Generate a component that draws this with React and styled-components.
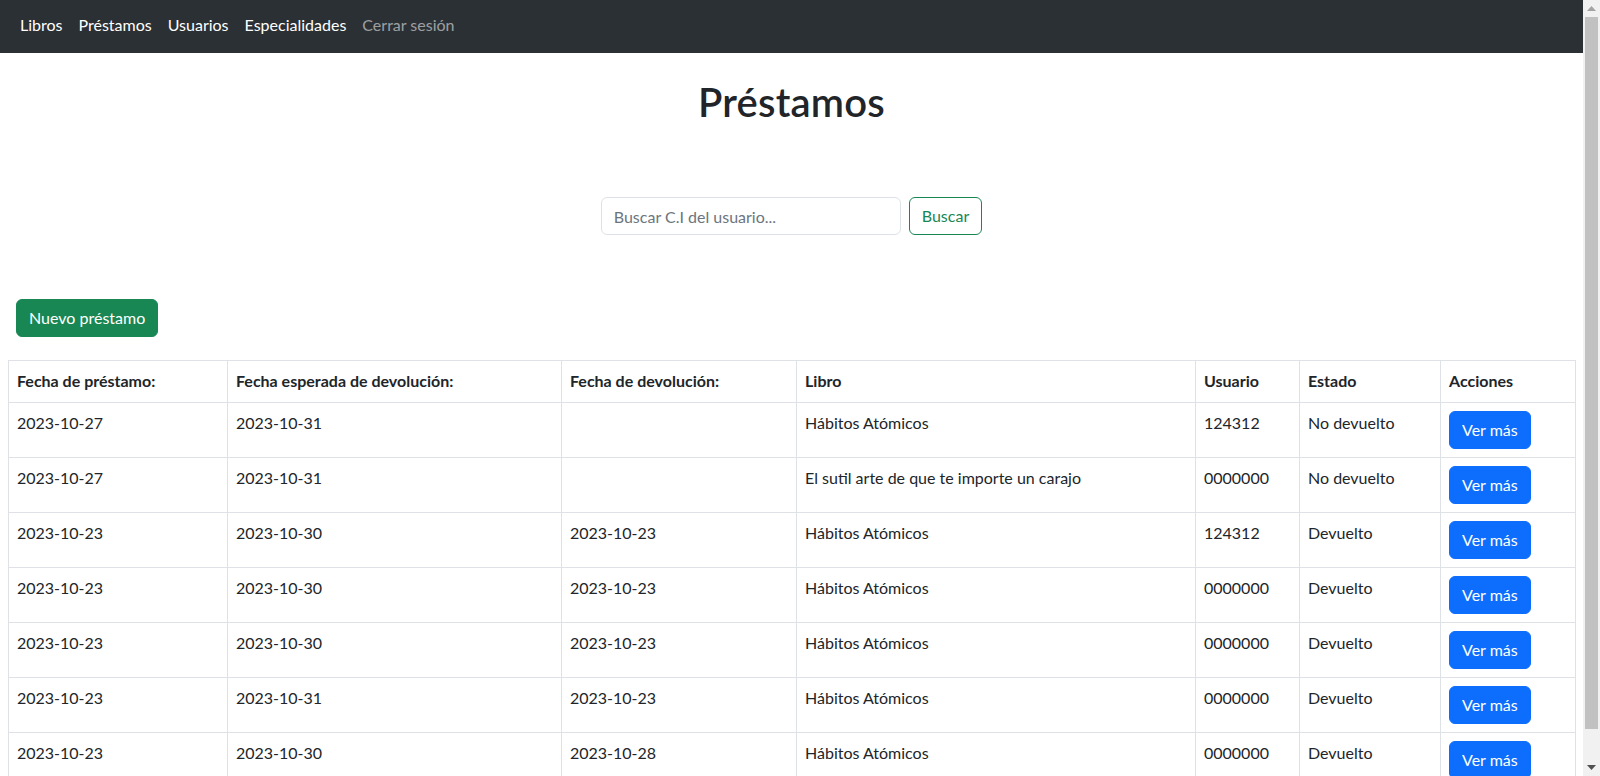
import React from 'react';
import styled, { createGlobalStyle } from 'styled-components';

const GlobalStyle = createGlobalStyle`
	html, body {
		margin: 0;
		padding: 0;
		height: 100%;
		overflow: hidden;
	}
	body {
		font-family: Lato, 'Open Sans', sans-serif;
		font-size: 16px;
		color: #212529;
		background: #fff;
	}
`;

const Shell = styled.div`
	display: flex;
	height: 776px;
	overflow: hidden;
`;

const Page = styled.div`
	flex: 1;
	min-width: 0;
	overflow: hidden;
`;

const Navbar = styled.nav`
	display: flex;
	align-items: center;
	box-sizing: border-box;
	height: 53px;
	padding: 0 12px 3px;
	background: #2b3035;
`;

const NavLink = styled.a`
	padding: 0 8px;
	font-size: 16px;
	line-height: 24px;
	color: ${(p) => (p.$muted ? 'rgba(255, 255, 255, 0.55)' : '#fff')};
	text-decoration: none;
	cursor: pointer;
`;

const Content = styled.main`
	padding: 0 8px;
`;

const Title = styled.h1`
	margin: 25px 0 0;
	font-size: 40px;
	line-height: 48px;
	font-weight: 600;
	letter-spacing: 0.2px;
	text-align: center;
`;

const SearchForm = styled.form`
	display: flex;
	justify-content: center;
	gap: 8px;
	margin-top: 71px;
`;

const SearchInput = styled.input`
	box-sizing: border-box;
	width: 300px;
	height: 38px;
	padding: 6px 12px;
	font-family: inherit;
	font-size: 16px;
	color: #212529;
	border: 1px solid #dee2e6;
	border-radius: 6px;
	outline: none;

	&::placeholder {
		color: #6c757d;
	}
`;

const Button = styled.button`
	box-sizing: border-box;
	height: 38px;
	padding: 6px 12px;
	font-family: inherit;
	font-size: 16px;
	line-height: 24px;
	border-radius: 6px;
	border: 1px solid ${(p) => p.$color};
	background: ${(p) => (p.$outline ? 'transparent' : p.$color)};
	color: ${(p) => (p.$outline ? p.$color : '#fff')};
	cursor: pointer;
	white-space: nowrap;
`;

const Toolbar = styled.div`
	margin-top: 64px;
	padding-left: 8px;
`;

const Table = styled.table`
	width: 100%;
	margin-top: 23px;
	border-collapse: collapse;
	table-layout: fixed;
`;

const Th = styled.th`
	padding: 8px 8px 9px;
	border: 1px solid #dee2e6;
	text-align: left;
	font-weight: 700;
	line-height: 24px;
	vertical-align: top;
`;

const Td = styled.td`
	padding: 8px;
	border: 1px solid #dee2e6;
	line-height: 24px;
	vertical-align: top;
	height: 38px;
`;

const Scrollbar = styled.div`
	display: flex;
	flex-direction: column;
	width: 17px;
	background: #f1f1f1;
`;

const Arrow = styled.div`
	display: flex;
	align-items: center;
	justify-content: center;
	height: 17px;
`;

const Track = styled.div`
	flex: 1;
	display: flex;
	padding: 0 2px;
`;

const Thumb = styled.div`
	width: 100%;
	height: 96%;
	background: #c1c1c1;
`;

const columns = [
	{ label: 'Fecha de préstamo:', width: 219 },
	{ label: 'Fecha esperada de devolución:', width: 334 },
	{ label: 'Fecha de devolución:', width: 235 },
	{ label: 'Libro', width: 399 },
	{ label: 'Usuario', width: 104 },
	{ label: 'Estado', width: 141 },
	{ label: 'Acciones', width: 135 },
];

const loans = [
	['2023-10-27', '2023-10-31', '', 'Hábitos Atómicos', '124312', 'No devuelto'],
	['2023-10-27', '2023-10-31', '', 'El sutil arte de que te importe un carajo', '0000000', 'No devuelto'],
	['2023-10-23', '2023-10-30', '2023-10-23', 'Hábitos Atómicos', '124312', 'Devuelto'],
	['2023-10-23', '2023-10-30', '2023-10-23', 'Hábitos Atómicos', '0000000', 'Devuelto'],
	['2023-10-23', '2023-10-30', '2023-10-23', 'Hábitos Atómicos', '0000000', 'Devuelto'],
	['2023-10-23', '2023-10-31', '2023-10-23', 'Hábitos Atómicos', '0000000', 'Devuelto'],
	['2023-10-23', '2023-10-30', '2023-10-28', 'Hábitos Atómicos', '0000000', 'Devuelto'],
];

const App = () => {
	return (
		<Shell>
			<GlobalStyle />
			<Page>
				<Navbar>
					<NavLink>Libros</NavLink>
					<NavLink>Préstamos</NavLink>
					<NavLink>Usuarios</NavLink>
					<NavLink>Especialidades</NavLink>
					<NavLink $muted>Cerrar sesión</NavLink>
				</Navbar>
				<Content>
					<Title>Préstamos</Title>
					<SearchForm onSubmit={(e) => e.preventDefault()}>
						<SearchInput placeholder='Buscar C.I del usuario...' />
						<Button $outline $color='#198754' type='submit'>
							Buscar
						</Button>
					</SearchForm>
					<Toolbar>
						<Button $color='#198754'>Nuevo préstamo</Button>
					</Toolbar>
					<Table>
						<colgroup>
							{columns.map((c) => (
								<col key={c.label} style={{ width: c.width }} />
							))}
						</colgroup>
						<thead>
							<tr>
								{columns.map((c) => (
									<Th key={c.label}>{c.label}</Th>
								))}
							</tr>
						</thead>
						<tbody>
							{loans.map((row, i) => (
								<tr key={i}>
									{row.map((cell, j) => (
										<Td key={j}>{cell}</Td>
									))}
									<Td>
										<Button $color='#0d6efd'>Ver más</Button>
									</Td>
								</tr>
							))}
						</tbody>
					</Table>
				</Content>
			</Page>
			<Scrollbar>
				<Arrow>
					<svg width='9' height='5' viewBox='0 0 9 5'>
						<path d='M0 5 L4.5 0 L9 5 Z' fill='#a3a3a3' />
					</svg>
				</Arrow>
				<Track>
					<Thumb />
				</Track>
				<Arrow>
					<svg width='9' height='5' viewBox='0 0 9 5'>
						<path d='M0 0 L4.5 5 L9 0 Z' fill='#505050' />
					</svg>
				</Arrow>
			</Scrollbar>
		</Shell>
	);
};

export default App;
